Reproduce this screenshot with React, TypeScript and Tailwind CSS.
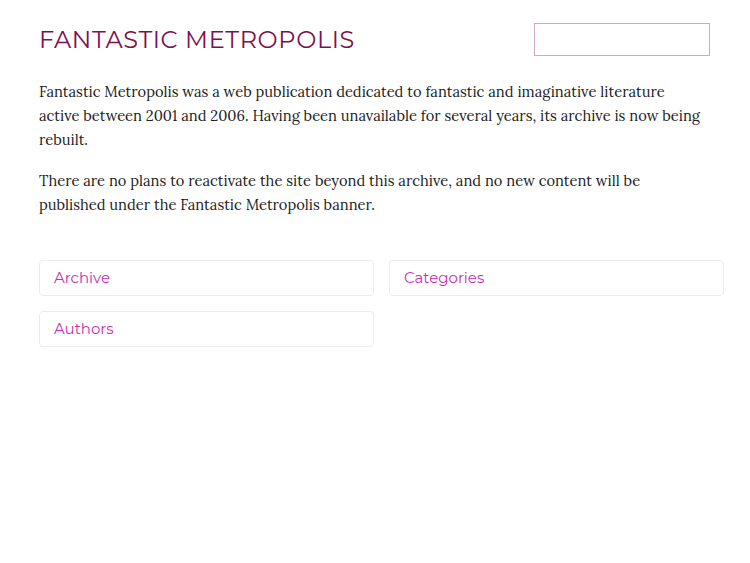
import React from 'react';

const links = ['Archive', 'Categories', 'Authors'];

export default function App() {
  return (
    <div className="min-h-screen bg-white pl-[39px] pr-[26px] pt-[23px]">
      <header className="flex items-start justify-between pr-[14px]">
        <h1 className="mt-[2px] font-['Montserrat','DejaVu_Sans',sans-serif] text-[24px] font-normal leading-[30px] tracking-[0.6px] text-[#7b1250]">
          FANTASTIC METROPOLIS
        </h1>
        <input
          type="text"
          aria-label="Search"
          className="h-[33px] w-[176px] border border-[#d6a7c3] bg-white outline-none"
        />
      </header>

      <div className="mt-[24px] pr-[19px] font-['Lora','Liberation_Serif',serif] text-[14.7px] leading-[24px] text-[#222]">
        <p>
          Fantastic Metropolis was a web publication dedicated to fantastic and imaginative literature
          active between 2001 and 2006. Having been unavailable for several years, its archive is now
          being rebuilt.
        </p>
        <p className="mt-[17px]">
          There are no plans to reactivate the site beyond this archive, and no new content will be
          published under the Fantastic Metropolis banner.
        </p>
      </div>

      <div className="mt-[43px] grid grid-cols-2 gap-x-[15px] gap-y-[15px]">
        {links.map((label) => (
          <a
            key={label}
            href="#"
            className="block h-[36px] rounded-[4px] border border-[#ececec] px-[14px] font-['Montserrat','Open_Sans',sans-serif] text-[15px] leading-[34px] text-[#c631b2]"
          >
            {label}
          </a>
        ))}
      </div>
    </div>
  );
}
